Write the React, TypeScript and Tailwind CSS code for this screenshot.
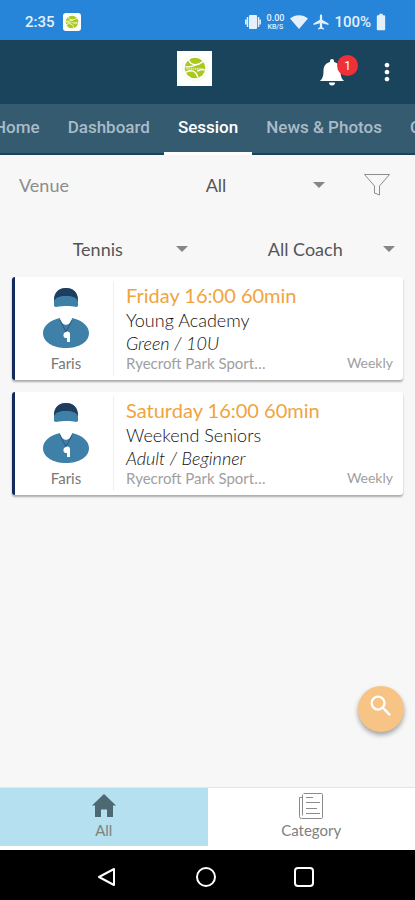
import type { ReactNode } from "react";
import { MdMoreVert, MdSearch, MdAirplanemodeActive, MdBatteryFull } from "react-icons/md";

type Session = { time: string; name: string; level: string; place: string; coach: string; repeat: string };

const sessions: Session[] = [
  { time: "Friday 16:00 60min", name: "Young Academy", level: "Green / 10U", place: "Ryecroft Park Sport…", coach: "Faris", repeat: "Weekly" },
  { time: "Saturday 16:00 60min", name: "Weekend Seniors", level: "Adult / Beginner", place: "Ryecroft Park Sport…", coach: "Faris", repeat: "Weekly" },
];

const tabs = ["Home", "Dashboard", "Session", "News & Photos", "Chat"];

function Ball({ className }: { className: string }) {
  return (
    <svg viewBox="0 0 24 24" className={className} aria-hidden="true">
      <circle cx="12" cy="12" r="11.5" fill="none" stroke="#dfe8c0" strokeWidth="0.6" strokeDasharray="1 1" />
      <circle cx="12" cy="12" r="9.5" fill="#a9c91f" />
      <path d="M6 4c1 4 4 5 7 5s6-3 8-4M3 16c4-2 7-2 9 0s2 3 3 5M13 9c-3 2-6 2-10 2M14 15c3-2 5-2 8-1" fill="none" stroke="#fff" strokeWidth="1.3" />
      <path d="M4 12.800h16" stroke="#eef5cd" strokeWidth="1.2" strokeDasharray="1.4 .6" />
    </svg>
  );
}

function CoachPicture() {
  return (
    <svg viewBox="0 0 48 62" className="h-[62px] w-12" aria-hidden="true">
      <path d="M12 19V13C12 5 17 1 24 1s12 4 12 12v6c-2 2-4 0-12 0s-10 2-12 0Z" fill="#3f80a8" />
      <path d="M12 14C12 5 17 1 24 1s12 4 12 13c-3-5-8-5-12-5s-9 0-12 5Z" fill="#1f3d5c" />
      <path d="M18 31c1 9 11 9 12 0 10 2 17 8 17 15 0 9-10 15-23 15S1 55 1 46c0-7 7-13 17-15Z" fill="#3f80a8" />
      <path d="m18 33 6 12 6-12" fill="none" stroke="#2a5678" strokeWidth="1" />
      <path d="M24 45c2-1 4 0 4 2v8h-3v-4c-4 1-5-5-1-6Z" fill="#fff" />
    </svg>
  );
}

function Picker({ label, id, options, className }: { label: string; id: string; options: string[]; className: string }) {
  return (
    <div className={`relative ${className}`}>
      <select id={id} aria-label={label} className="h-10 w-full appearance-none bg-transparent text-[18px] text-[#555] [text-align-last:center]">
        {options.map((o) => (
          <option key={o}>{o}</option>
        ))}
      </select>
      <svg viewBox="0 0 12 6" className="pointer-events-none absolute top-[17px] right-2 h-[6px] w-3" aria-hidden="true">
        <path d="M0 0h12L6 6Z" fill="#868686" />
      </svg>
    </div>
  );
}

function SessionCard({ s }: { s: Session }) {
  return (
    <li className="flex h-[103px] rounded-[3px] border-l-[3px] border-[#142a5c] bg-white shadow-[0_2px_2px_rgba(0,0,0,0.3)]">
      <div className="my-1 flex w-[99px] flex-col items-center border-r border-[#efefef] pt-[6px] pl-1">
        <CoachPicture />
        <span className="mt-1 text-[15px] leading-5 text-[#777]">{s.coach}</span>
      </div>
      <div className="min-w-0 flex-1 pt-[6px] pr-[10px] pl-3">
        <h2 className="text-[20px] leading-6 text-[#f0a440]">{s.time}</h2>
        <p className="text-[18px] leading-[26px] font-light text-[#111]">{s.name}</p>
        <p className="text-[18px] leading-5 font-light text-[#111] italic">{s.level}</p>
        <div className="flex justify-between text-[15px] leading-5 text-[#a0a0a0]">
          <span>{s.place}</span>
          <span className="text-[14px]">{s.repeat}</span>
        </div>
      </div>
    </li>
  );
}

function BottomTab({ label, active, children }: { label: string; active?: boolean; children: ReactNode }) {
  return (
    <button className={`flex h-[58px] flex-1 flex-col items-center pt-1 text-[15px] leading-5 text-[#808080] ${active ? "bg-[#b5e0ef]" : "bg-white"}`}>
      <span className="flex h-7 items-center">{children}</span>
      {label}
    </button>
  );
}

export default function App() {
  return (
    <div className="relative flex min-h-screen flex-col overflow-hidden bg-[#f7f7f7] font-[Lato,sans-serif]">
      <div className="flex h-10 items-center bg-[#2785d9] pt-1 pr-6 pl-[25px] font-[Roboto,sans-serif] text-[15px] font-medium text-[#e4f1fd]">
        <span>2:35</span>
        <span className="ml-2 flex h-[18px] w-[18px] items-center justify-center rounded-[3px] bg-white">
          <Ball className="h-4 w-4" />
        </span>
        <div className="ml-auto flex items-center">
          <svg viewBox="0 0 16 14" className="h-[14px] w-4" fill="none" stroke="currentColor" strokeWidth="1.5" aria-hidden="true">
            <rect x="4" y="0" width="8" height="14" rx="1" fill="currentColor" stroke="none" />
            <path d="M2.500 2v10M13.500 2v10M.8 4.500v5M15.200 4.500v5" />
          </svg>
          <span className="ml-[6px] flex flex-col items-center text-[9px] leading-[9px]">
            <span>0.00</span>
            <span className="text-[7px] leading-[8px]">KB/S</span>
          </span>
          <svg viewBox="0 0 18 14" className="ml-[6px] h-[14px] w-[18px]" fill="currentColor" aria-hidden="true">
            <path d="M0 3.500C5-1 13-1 18 3.500L9 14Z" />
          </svg>
          <MdAirplanemodeActive className="ml-1 size-[18px]" />
          <span className="ml-1">100%</span>
          <MdBatteryFull className="size-5" />
        </div>
      </div>

      <header className="flex h-16 items-center justify-between bg-[#19445c] pr-[18px] text-white">
        <span className="flex-1" />
        <div className="mr-[106px] mb-2 flex size-[35px] items-center justify-center bg-white">
          <Ball className="size-[26px]" />
        </div>
        <div className="flex items-center gap-[31px]">
          <button aria-label="Notifications, 1 new" className="relative flex size-7 items-center justify-center">
            <svg viewBox="0 0 24 28" className="h-7 w-6" fill="currentColor" aria-hidden="true">
              <path d="M12 1c1.200 0 2 .8 2 2v1c4.500 1 6.500 4.500 6.500 8.500 0 6 1 8 3.500 10.500H0c2.500-2.500 3.500-4.500 3.500-10.500C3.500 8.500 5.500 5 10 4V3c0-1.200.8-2 2-2ZM9 24.500h6a3 3 0 0 1-6 0Z" />
            </svg>
            <span className="absolute -top-[3px] -right-3 flex size-[21px] items-center justify-center rounded-full bg-[#ee3138] font-[Roboto,sans-serif] text-[12px]">1</span>
          </button>
          <button aria-label="More" className="flex w-5 justify-center">
            <MdMoreVert className="size-7 shrink-0" />
          </button>
        </div>
      </header>

      <nav className="overflow-hidden bg-[#355b70]">
        <div className="-ml-5 flex h-[51px] border-b-2 border-[#19445c] font-[Roboto,sans-serif] text-[17px] font-medium whitespace-nowrap">
          {tabs.map((t) => (
            <button
              key={t}
              className={`-mb-[2px] shrink-0 border-b-[3px] px-[14px] ${t === "Session" ? "border-white text-white" : "border-transparent text-[#a9bcc8]"}`}
            >
              {t}
            </button>
          ))}
        </div>
      </nav>

      <main className="flex-1">
        <div className="mt-[10px] flex items-center pr-6 pl-[19px]">
          <label htmlFor="venue" className="w-[80px] text-[18px] text-[#8c8c8c]">Venue</label>
          <Picker label="Venue" id="venue" options={["All"]} className="flex-1" />
          <button aria-label="Filter" className="ml-[30px]">
            <svg viewBox="0 0 28 24" className="h-6 w-7" fill="none" stroke="#8d8d8d" aria-hidden="true">
              <path d="M1.500 1.500h25l-10 11.500v9l-5-2v-7Z" />
            </svg>
          </button>
        </div>
        <div className="mt-6 grid grid-cols-2">
          <Picker label="Sport" id="sport" options={["Tennis"]} className="mr-3" />
          <Picker label="Coach" id="coach" options={["All Coach"]} className="mr-3" />
        </div>
        <ul className="mt-2 flex flex-col gap-3 px-3">
          {sessions.map((s) => (
            <SessionCard key={s.time} s={s} />
          ))}
        </ul>
      </main>

      <button aria-label="Search" className="absolute right-[11px] bottom-[168px] flex size-[46px] items-center justify-center rounded-full bg-[#f7c486] pb-[6px] text-white shadow-[0_3px_5px_rgba(0,0,0,0.35)]">
        <MdSearch className="size-7" />
      </button>

      <footer>
        <div className="flex h-[63px] border-t border-[#e4e4e4] bg-white">
          <BottomTab label="All" active>
            <svg viewBox="0 0 24 24" className="size-6" fill="#4d6872" aria-hidden="true">
              <path d="m12 0 12 11.500h-3V23h-6v-7.500H9V23H3V11.500H0Z" />
            </svg>
          </BottomTab>
          <BottomTab label="Category">
            <svg viewBox="0 0 26 28" className="h-7 w-[26px]" fill="none" stroke="#8b8b8b" aria-hidden="true">
              <path d="M5.500 1.500h18a1 1 0 0 1 1 1v23a1 1 0 0 1-1 1h-20a2 2 0 0 1-2-2v-19h3M4.500 2.500v21M8 5.500h7M8 10.500h14M8 16.500h11M8 21.500h14" />
            </svg>
          </BottomTab>
        </div>
        <div className="flex h-[50px] items-center justify-center bg-black pt-1 pr-1">
          <div className="flex w-[217px] shrink-0 items-center justify-between">
            <button aria-label="Back">
              <svg viewBox="0 0 20 20" className="size-5" fill="none" stroke="#fff" strokeWidth="2" strokeLinejoin="round" aria-hidden="true">
                <path d="M17 2v16L2 10Z" />
              </svg>
            </button>
            <button aria-label="Home screen" className="size-5 rounded-full border-[2px] border-white" />
            <button aria-label="Recent apps" className="size-5 rounded-[4px] border-[2px] border-white" />
          </div>
        </div>
      </footer>
    </div>
  );
}
